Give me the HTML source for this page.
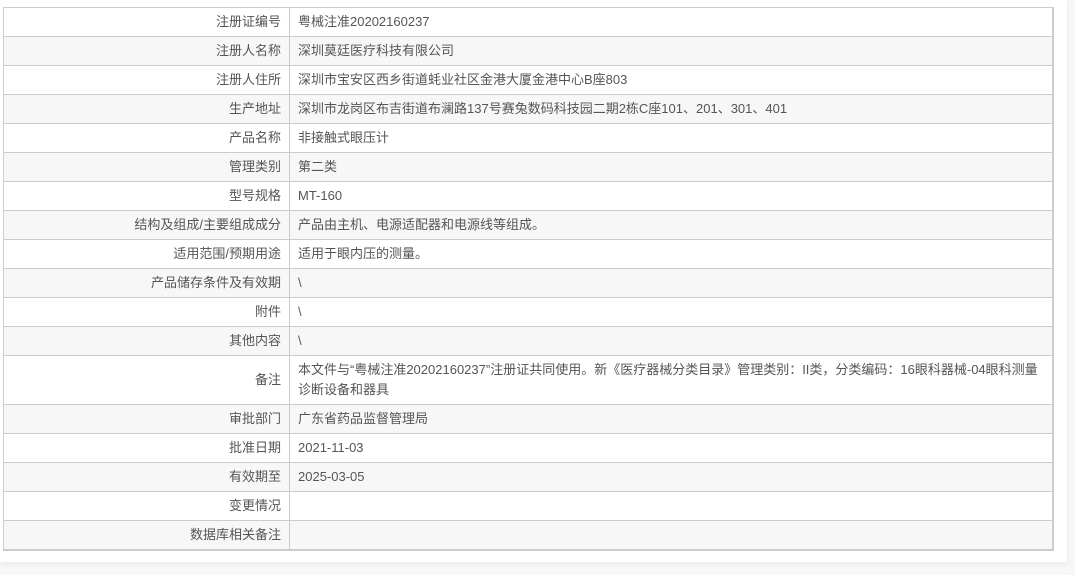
<!DOCTYPE html>
<html><head><meta charset="utf-8"><style>
body{margin:0;background:#f7f7f7;width:1075px;height:575px;overflow:hidden;font-family:"Liberation Sans","Noto Sans CJK SC",sans-serif;font-size:13px;color:#555}
.box{position:absolute;left:0;top:0;width:1067px;height:562px;background:#fff;box-shadow:0 2px 6px rgba(0,0,0,.06)}
table{position:absolute;left:3px;top:7px;width:1051px;border-collapse:collapse;border:1px solid #ccc;border-bottom:2px solid #ccc;border-right:2px solid #ccc}
td{border:1px solid #ccc;height:28px;padding:0 8px;line-height:20px}
td.l{width:269px;text-align:right}
tr:nth-child(even){background:#f7f7f7}
tr.t td{height:48px}
</style></head><body><div class="box"></div>
<table>
<tr><td class="l">注册证编号</td><td>粤械注准20202160237</td></tr>
<tr><td class="l">注册人名称</td><td>深圳莫廷医疗科技有限公司</td></tr>
<tr><td class="l">注册人住所</td><td>深圳市宝安区西乡街道蚝业社区金港大厦金港中心B座803</td></tr>
<tr><td class="l">生产地址</td><td>深圳市龙岗区布吉街道布澜路137号赛兔数码科技园二期2栋C座101、201、301、401</td></tr>
<tr><td class="l">产品名称</td><td>非接触式眼压计</td></tr>
<tr><td class="l">管理类别</td><td>第二类</td></tr>
<tr><td class="l">型号规格</td><td>MT-160</td></tr>
<tr><td class="l">结构及组成/主要组成成分</td><td>产品由主机、电源适配器和电源线等组成。</td></tr>
<tr><td class="l">适用范围/预期用途</td><td>适用于眼内压的测量。</td></tr>
<tr><td class="l">产品储存条件及有效期</td><td>\</td></tr>
<tr><td class="l">附件</td><td>\</td></tr>
<tr><td class="l">其他内容</td><td>\</td></tr>
<tr class="t"><td class="l">备注</td><td>本文件与“粤械注准20202160237”注册证共同使用。新《医疗器械分类目录》管理类别：II类，分类编码：16眼科器械-04眼科测量诊断设备和器具</td></tr>
<tr><td class="l">审批部门</td><td>广东省药品监督管理局</td></tr>
<tr><td class="l">批准日期</td><td>2021-11-03</td></tr>
<tr><td class="l">有效期至</td><td>2025-03-05</td></tr>
<tr><td class="l">变更情况</td><td></td></tr>
<tr><td class="l">数据库相关备注</td><td></td></tr>
</table></body></html>
